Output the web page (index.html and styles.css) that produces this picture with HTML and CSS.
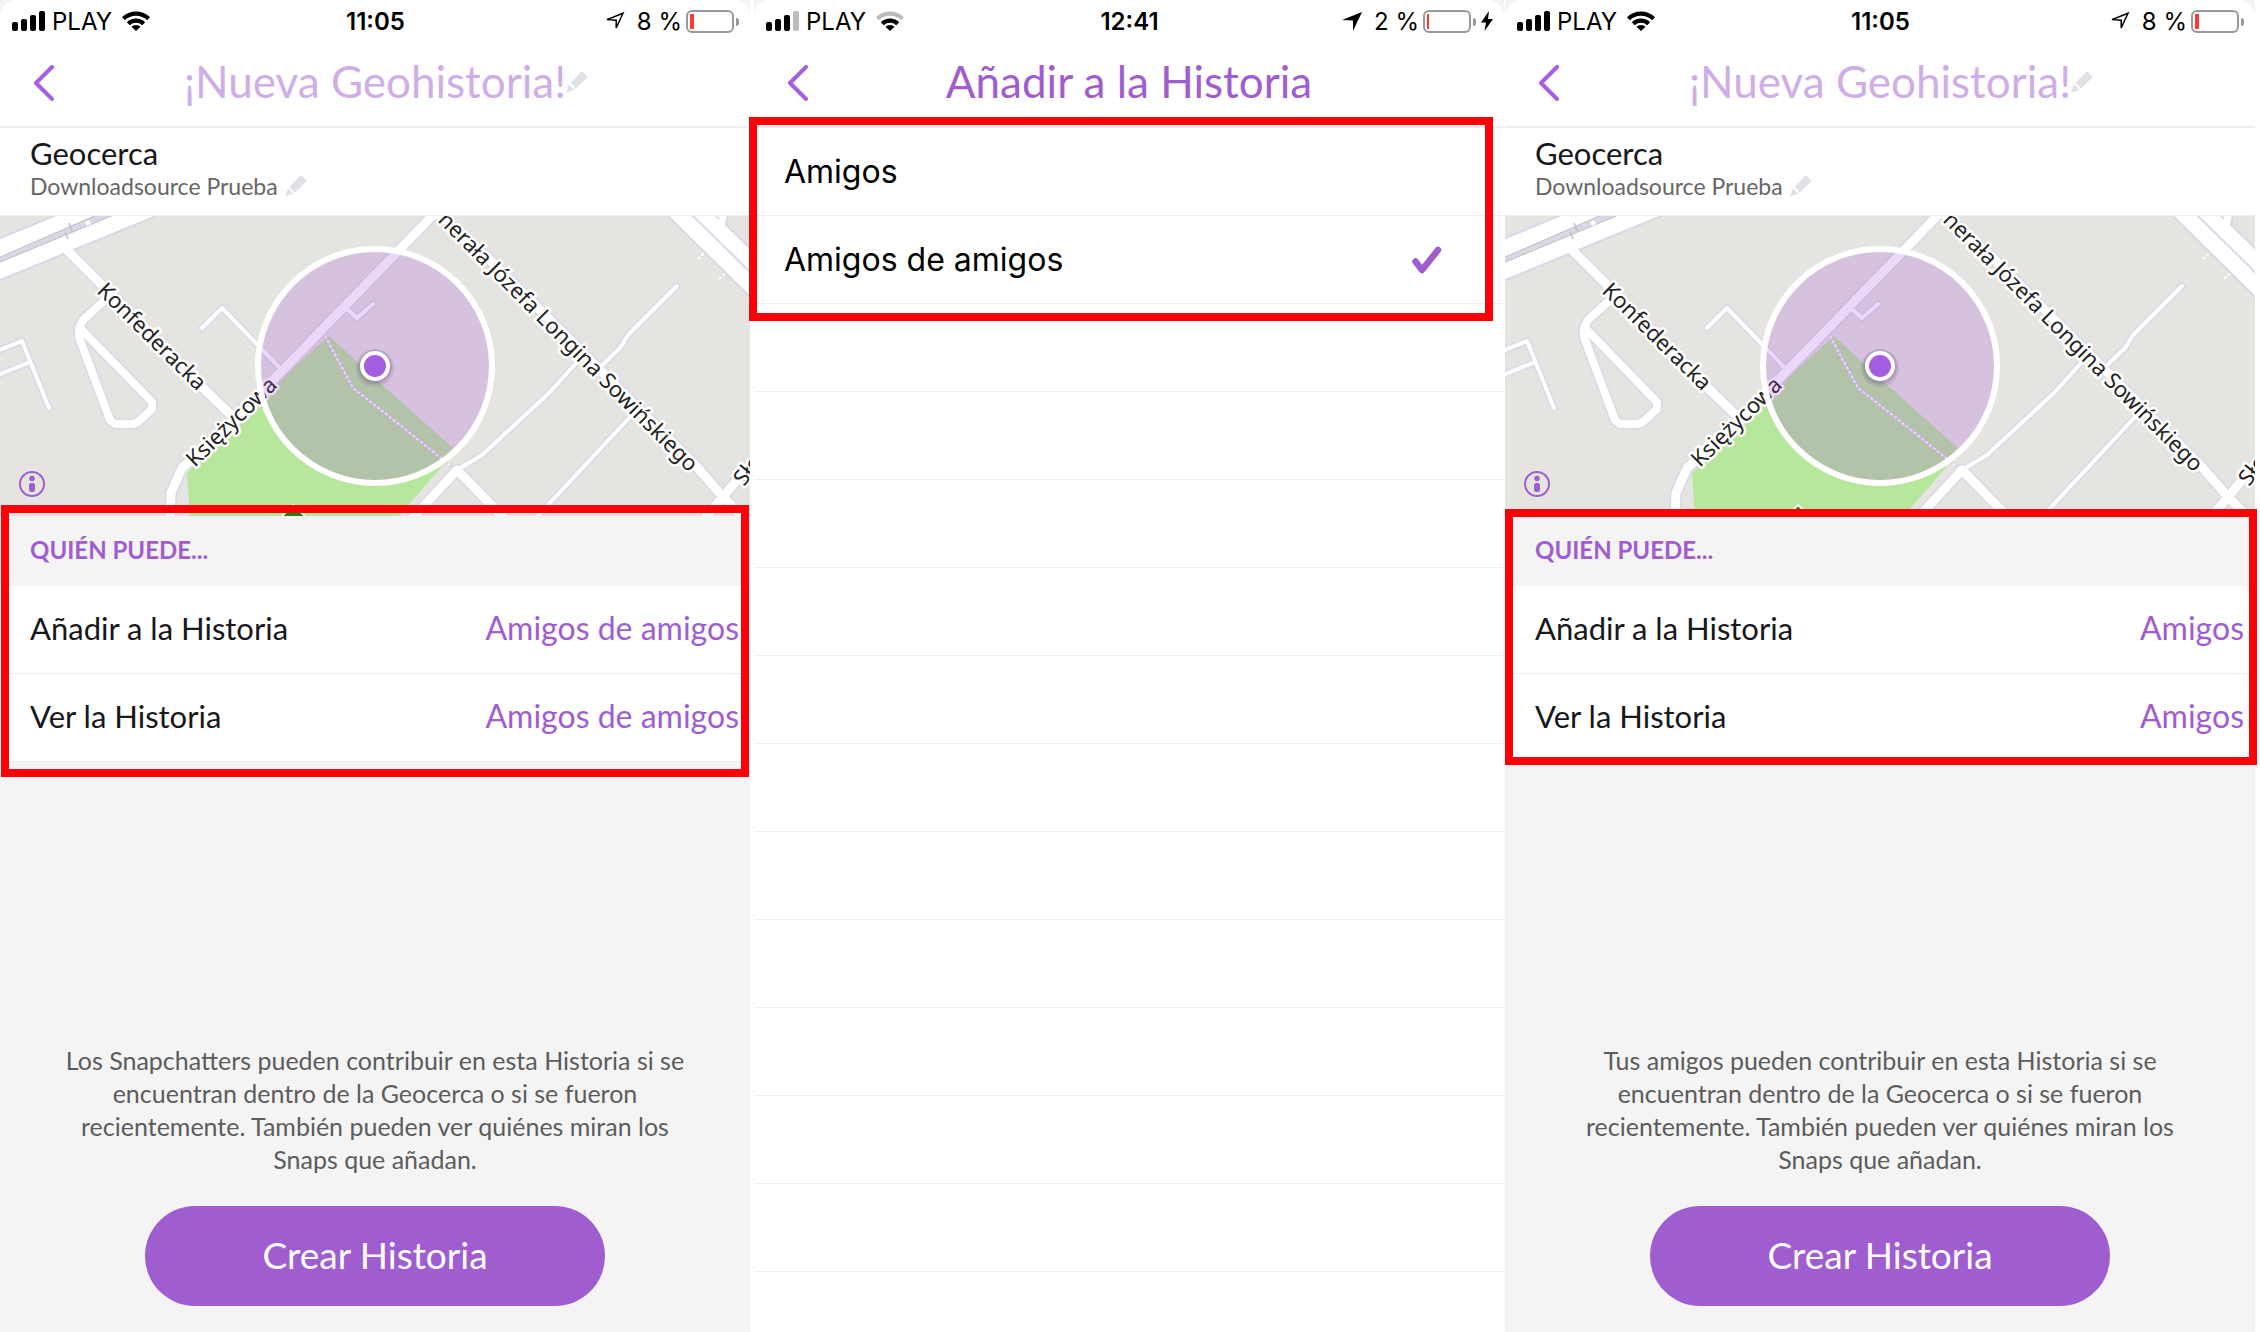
FILE: index.html
```html
<!DOCTYPE html>
<html lang="es">
<head>
<meta charset="utf-8">
<meta name="viewport" content="width=device-width, initial-scale=1">
<title>Geohistoria</title>
<link rel="stylesheet" href="styles.css">
</head>
<body>
<svg class="defs" aria-hidden="true">
  <symbol id="bars" viewBox="0 0 34 20">
    <rect x="0" y="11" width="6" height="9" rx="2"/><rect x="9" y="8" width="6" height="12" rx="2"/><rect x="18" y="4" width="6" height="16" rx="2"/><rect class="last" x="27" y="0" width="6" height="20" rx="2"/>
  </symbol>
  <symbol id="wifi" viewBox="0 0 28 20">
    <path class="last" d="M0 6.2A20 20 0 0 1 28 6.2L25.2 9.2A16 16 0 0 0 2.8 9.2Z"/>
    <path d="M4.8 11.2A13.200 13.200 0 0 1 23.200 11.200L20.200 14.200A9 9 0 0 0 7.800 14.200Z"/>
    <path d="M14 20L9.400 15.800A6.500 6.500 0 0 1 18.600 15.800Z"/>
  </symbol>
  <symbol id="arrow-line" viewBox="0 0 20 20"><path d="M2 8.600L18 2.200L11.200 17V9.200Z" fill="none" stroke="#000" stroke-width="1.500"/></symbol>
  <symbol id="arrow-fill" viewBox="0 0 20 20"><path d="M0 9L20 1L11 20V9.500Z"/></symbol>
  <symbol id="bolt" viewBox="0 0 12 20"><path d="M8 0L0 11.500H5L3.500 20L12 8H7Z"/></symbol>
  <symbol id="back" viewBox="0 0 20 36"><path d="M18 2L2 18L18 34" fill="none" stroke="#a560e3" stroke-width="4" stroke-linecap="round" stroke-linejoin="round"/></symbol>
  <symbol id="pencil" viewBox="0 0 22 22"><path fill="#e0e1e7" d="M15 1Q16 0 17 1L21 5Q22 6 21 7L10 17.500L4.500 12ZM3.300 13.500L8 18.300Q8 19 7 19L1 21.500Q0 21.500 .500 20.500L2.500 14Q2.700 13.500 3.300 13.500Z"/></symbol>
  <symbol id="map" viewBox="0 0 750 300" preserveAspectRatio="xMidYMid slice">
    <rect x="-400" y="-10" width="1550" height="320" fill="#e5e4e0"/>
    <path d="M187 257L190 302H397L445 247L453 232L380 167L329 120L280 164Z" fill="#b7e69d"/>
    <g fill="none" stroke-linejoin="round" stroke-linecap="round">
      <g stroke="#d8d8e8">
        <g stroke-width="12"><path id="roads-wide" d="M67 34L105 72L202 171L236 204M170 305L171 277L182 252L197 239L280 157L438 -6M425 -14L487 41L697 251L723 281L748 306M762 234L723 281L700 308M457 254L410 305M457 254L507 305"/></g>
        <g stroke-width="11"><path id="loop" d="M107 82L83 104L79 112V121L110 204L115 208H133L138 206L152 193V186L82 114"/></g>
        <g stroke-width="7"><path id="roads-thin" d="M-5 136L22 125L49 192M-5 160L28 147M202 112L222 92L280 152M348 94L357 102L373 88M457 254L482 239L550 176L577 146M596 155L620 132L628 119L677 70M534 304L630 201"/></g>
      </g>
    </g>
    <g fill="#fff" stroke="#d8d8e8" stroke-width="2">
      <path d="M-2 23L59 -2H161L-2 65Z"/>
      <path d="M666 -2L752 83V34L726 9L728 -2Z"/><path d="M691 -2L752 58M716 0L719 3"/>
    </g>
    <path d="M-2 42L99 -2H116L-2 47Z" fill="#d8d8e6" stroke="#bdbdbf" stroke-width="1"/>
    <path d="M69 7L72 15M65 16L68 23" stroke="#bdbdbf" stroke-width="1.500"/>
    <path d="M85 6L89 4L91 8L87 10Z" fill="#fff"/>
    <g fill="none" stroke="#fff" stroke-linejoin="round" stroke-linecap="round">
      <use href="#roads-wide" stroke-width="9"/><use href="#loop" stroke-width="8"/><use href="#roads-thin" stroke-width="4"/>
    </g>
    <path d="M325 120L353 172L400 209L452 251" fill="none" stroke="#cfcfe2" stroke-width="3"/>
    <path d="M325 120L353 172L400 209L452 251M698 43L704 37M719 63L725 57" fill="none" stroke="#fff" stroke-width="2" stroke-dasharray="3 2"/>
    <path d="M293 289L283 299V303H304V299Z" fill="#1f8400" stroke="#fff" stroke-width="2"/>
    <g class="road-names">
      <text transform="translate(96 76) rotate(44.500)">Konfederacka</text>
      <text transform="translate(195 252) rotate(-44.500)">Księżycowa</text>
      <text transform="translate(689 257) rotate(45)" text-anchor="end">nerała Józefa Longina Sowińskiego</text>
      <text transform="translate(744 271) rotate(-52)">Sło</text>
    </g>
    <circle cx="375" cy="150" r="117" fill="#a54bd6" fill-opacity=".22" stroke="none"/>
    <circle cx="375" cy="150" r="117" fill="none" stroke="#fff" stroke-width="6"/>
    <circle cx="375" cy="152" r="19" fill="#503070" opacity=".12"/><circle cx="375" cy="151" r="17" fill="#503070" opacity=".18"/>
    <circle cx="375" cy="150" r="15" fill="#fff"/><circle cx="375" cy="150" r="11" fill="#a35fe0"/>
  </symbol>
  <symbol id="info" viewBox="0 0 26 26"><circle cx="13" cy="13" r="12" fill="none" stroke="#a05dcf" stroke-width="2"/><circle cx="13" cy="7.500" r="2.700" fill="#a05dcf"/><rect x="10" y="12" width="6" height="9" rx="2.500" fill="#a05dcf"/></symbol>
  <symbol id="check" viewBox="0 0 30 28"><path d="M3.500 15.500L10 24L26 4" fill="none" stroke="#a05dcf" stroke-width="6.500" stroke-linecap="round" stroke-linejoin="round"/></symbol>
</svg>

<main class="screens">
  <section class="phone">
    <header class="top">
      <div class="status">
        <div class="carrier"><svg class="i-bars"><use href="#bars"/></svg><span>PLAY</span><svg class="i-wifi"><use href="#wifi"/></svg></div>
        <time>11:05</time>
        <div class="power"><svg class="i-arrow"><use href="#arrow-line"/></svg><span>8 %</span><i class="battery"><b></b></i></div>
      </div>
      <div class="bar">
        <button class="back" aria-label="Atrás"><svg><use href="#back"/></svg></button>
        <h1 class="draft">¡Nueva Geohistoria!<button class="edit" aria-label="Editar nombre"><svg><use href="#pencil"/></svg></button></h1>
      </div>
    </header>
    <div class="fence">
      <h2>Geocerca</h2>
      <p>Downloadsource Prueba <button class="edit" aria-label="Editar geocerca"><svg><use href="#pencil"/></svg></button></p>
    </div>
    <div class="map"><svg class="canvas"><use href="#map"/></svg><button class="info" aria-label="Información"><svg><use href="#info"/></svg></button></div>
    <div class="access mark mark-a">
      <h3>QUIÉN PUEDE...</h3>
      <button class="row"><span>Añadir a la Historia</span><span class="value">Amigos de amigos</span></button>
      <button class="row"><span>Ver la Historia</span><span class="value">Amigos de amigos</span></button>
    </div>
    <footer>
      <p>Los Snapchatters pueden contribuir en esta Historia si se encuentran dentro de la Geocerca o si se fueron recientemente. También pueden ver quiénes miran los Snaps que añadan.</p>
      <button class="create">Crear Historia</button>
    </footer>
  </section>

  <section class="phone picker">
    <header class="top">
      <div class="status weak">
        <div class="carrier"><svg class="i-bars"><use href="#bars"/></svg><span>PLAY</span><svg class="i-wifi"><use href="#wifi"/></svg></div>
        <time>12:41</time>
        <div class="power"><svg class="i-arrow"><use href="#arrow-fill"/></svg><span>2 %</span><i class="battery"><b></b></i><svg class="i-bolt"><use href="#bolt"/></svg></div>
      </div>
      <div class="bar">
        <button class="back" aria-label="Atrás"><svg><use href="#back"/></svg></button>
        <h1>Añadir a la Historia</h1>
      </div>
    </header>
    <div class="options mark mark-b">
      <label class="option">Amigos<input type="radio" name="who"><svg><use href="#check"/></svg></label>
      <label class="option">Amigos de amigos<input type="radio" name="who" checked><svg><use href="#check"/></svg></label>
    </div>
    <div class="blank"></div>
  </section>

  <section class="phone">
    <header class="top">
      <div class="status">
        <div class="carrier"><svg class="i-bars"><use href="#bars"/></svg><span>PLAY</span><svg class="i-wifi"><use href="#wifi"/></svg></div>
        <time>11:05</time>
        <div class="power"><svg class="i-arrow"><use href="#arrow-line"/></svg><span>8 %</span><i class="battery"><b></b></i></div>
      </div>
      <div class="bar">
        <button class="back" aria-label="Atrás"><svg><use href="#back"/></svg></button>
        <h1 class="draft">¡Nueva Geohistoria!<button class="edit" aria-label="Editar nombre"><svg><use href="#pencil"/></svg></button></h1>
      </div>
    </header>
    <div class="fence">
      <h2>Geocerca</h2>
      <p>Downloadsource Prueba <button class="edit" aria-label="Editar geocerca"><svg><use href="#pencil"/></svg></button></p>
    </div>
    <div class="map"><svg class="canvas"><use href="#map"/></svg><button class="info" aria-label="Información"><svg><use href="#info"/></svg></button></div>
    <div class="access mark mark-c">
      <h3>QUIÉN PUEDE...</h3>
      <button class="row"><span>Añadir a la Historia</span><span class="value">Amigos</span></button>
      <button class="row"><span>Ver la Historia</span><span class="value">Amigos</span></button>
    </div>
    <footer>
      <p>Tus amigos pueden contribuir en esta Historia si se encuentran dentro de la Geocerca o si se fueron recientemente. También pueden ver quiénes miran los Snaps que añadan.</p>
      <button class="create">Crear Historia</button>
    </footer>
  </section>
</main>
</body>
</html>
```
FILE: styles.css
```css
* { box-sizing: border-box; }
body {
  margin: 0;
  background: #fff;
  font-family: Lato, "Open Sans", sans-serif;
  color: #16181a;
}
h1, h2, h3, p { margin: 0; font-weight: 400; }
button {
  padding: 0;
  border: 0;
  background: none;
  color: inherit;
  font: inherit;
  cursor: pointer;
}
svg { display: block; }
.defs { position: absolute; width: 0; height: 0; }

.screens {
  display: flex;
  min-height: 100vh;
  padding-right: 5px;
}
.phone {
  flex: 1 1 0;
  min-width: 0;
  display: flex;
  flex-direction: column;
  background: #f4f4f4;
}
.picker { margin: 0 1px 0 4px; }

/* status and title bars */
.top {
  height: 128px;
  background: #fff;
  border-bottom: 2px solid #eee;
  border-radius: 16px 16px 0 0;
}
.status {
  display: grid;
  grid-template-columns: 1fr auto 1fr;
  align-items: center;
  height: 40px;
  padding: 0 11px 0 12px;
  color: #000;
  font-family: Inter, sans-serif;
  font-size: 24px;
  line-height: 40px;
}
.status time { font-weight: 600; }
.status time, .status span { padding-top: 2px; }
.carrier, .power { display: flex; align-items: center; }
.carrier { gap: 6px; }
.carrier .i-wifi { margin-left: 4px; }
.power { justify-content: flex-end; }
.i-bars { width: 34px; height: 20px; }
.i-wifi { width: 28px; height: 20px; }
.i-arrow { width: 20px; height: 20px; margin-right: 12px; }
.i-bolt { width: 12px; height: 20px; margin-left: 5px; }
.weak { --last: #bcbcbc; }
.last { fill: var(--last, #000); }
.battery {
  position: relative;
  width: 48px;
  height: 23px;
  margin: 0 5px 0 4px;
  padding: 2px;
  border: 2px solid #999;
  border-radius: 6px;
}
.battery::after {
  content: "";
  position: absolute;
  top: 6px;
  right: -7px;
  width: 3px;
  height: 8px;
  border-radius: 0 3px 3px 0;
  background: #999;
}
.battery b { display: block; width: 4px; height: 15px; background: #ff3b30; }
.weak .battery b { width: 2px; }

.bar {
  display: grid;
  grid-template-columns: 54px 1fr 54px;
  align-items: center;
  height: 86px;
}
.back { justify-self: end; }
.back svg { width: 20px; height: 36px; }
.bar h1 {
  justify-self: center;
  position: relative;
  padding-bottom: 4px;
  color: #a05dcf;
  font-size: 44px;
  line-height: 56px;
  white-space: nowrap;
}
.bar .draft { color: #cfaee7; }
.edit svg { width: 22px; height: 22px; }
.draft .edit { position: absolute; left: 100%; top: 18px; }

/* geofence name */
.fence {
  height: 88px;
  padding: 7px 30px 0;
  background: #fff;
  border-bottom: 1px solid #eee;
}
.fence h2 { font-size: 31px; line-height: 36px; }
.fence p {
  display: flex;
  align-items: center;
  gap: 7px;
  color: #666;
  font-size: 23px;
  line-height: 30px;
}

.map { position: relative; height: 300px; overflow: hidden; }
.canvas { width: 100%; height: 300px; }
.road-names {
  fill: #222;
  stroke: #fff;
  stroke-width: 5px;
  stroke-linejoin: round;
  paint-order: stroke;
  font-family: "Noto Sans", sans-serif;
  font-size: 22px;
}
.info { position: absolute; left: 19px; bottom: 19px; }
.info svg { width: 26px; height: 26px; }

/* who can add and view */
.access h3 {
  height: 70px;
  padding: 0 30px;
  color: #a05dcf;
  font-size: 24px;
  font-weight: 700;
  line-height: 68px;
}
.row {
  display: flex;
  justify-content: space-between;
  align-items: center;
  width: 100%;
  height: 88px;
  padding: 0 11px 4px 30px;
  background: #fff;
  border-bottom: 1px solid #eee;
  font-size: 31px;
  line-height: 40px;
}
.value { color: #a05dcf; font-size: 32px; }

/* red highlight frames */
.mark { position: relative; }
.mark::after {
  content: "";
  position: absolute;
  z-index: 2;
  border: 8px solid #ff0008;
  pointer-events: none;
}
.mark-a::after { inset: -11px 1px -15px 1px; }
.mark-b::after { inset: -11px 11px -17px -5px; }
.mark-c::after { inset: -7px -2px -3px 0; }

footer {
  display: flex;
  flex-direction: column;
  align-items: center;
  gap: 30px;
  margin-top: auto;
  padding: 0 55px 26px;
}
footer p {
  max-width: 640px;
  color: #5c5c5c;
  font-size: 25px;
  line-height: 33px;
  text-align: center;
}
.create {
  width: 460px;
  height: 100px;
  padding-bottom: 4px;
  border-radius: 50px;
  background: #a05dcf;
  color: #fff;
  font-size: 37px;
}

/* option picker */
.picker { background: linear-gradient(#f4f4f4 20px, #fff 20px); }
.option {
  display: flex;
  justify-content: space-between;
  align-items: center;
  height: 88px;
  padding: 0 62px 0 30px;
  background: #fff;
  border-bottom: 1px solid #eee;
  color: #000;
  font-family: Inter, sans-serif;
  font-size: 32px;
  line-height: 40px;
}
.option input { appearance: none; width: 0; height: 0; margin: 0 auto; }
.option svg { width: 30px; height: 28px; visibility: hidden; }
.option input:checked + svg { visibility: visible; }
.blank {
  flex: 1;
  background: repeating-linear-gradient(#fff 0 87px, #eee 87px 88px);
}
```
